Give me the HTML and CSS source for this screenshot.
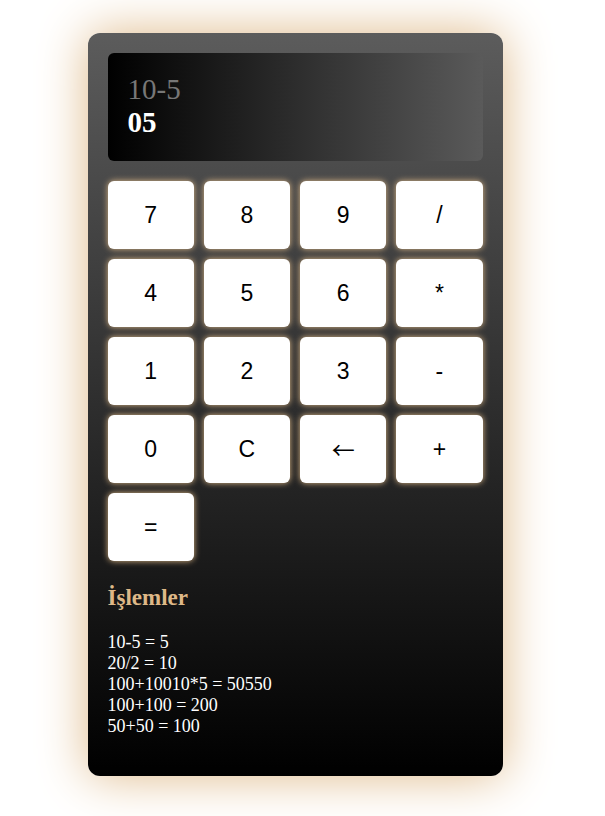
FILE: index.html
```html
<!DOCTYPE html>
<html lang="tr">
<head>
<meta charset="utf-8">
<title>Hesap Makinesi</title>
<link rel="stylesheet" href="styles.css">
</head>
<body>
<div class="page">
  <div class="calc">
    <div class="display">
      <div class="expr">10-5</div>
      <div class="result">05</div>
    </div>
    <div class="keys">
      <button class="key">7</button>
      <button class="key">8</button>
      <button class="key">9</button>
      <button class="key">/</button>
      <button class="key">4</button>
      <button class="key">5</button>
      <button class="key">6</button>
      <button class="key">*</button>
      <button class="key">1</button>
      <button class="key">2</button>
      <button class="key">3</button>
      <button class="key">-</button>
      <button class="key">0</button>
      <button class="key">C</button>
      <button class="key"><span class="arrow">←</span></button>
      <button class="key">+</button>
      <button class="key">=</button>
    </div>
    <h2 class="history-title">İşlemler</h2>
    <ul class="history">
      <li>10-5 = 5</li>
      <li>20/2 = 10</li>
      <li>100+10010*5 = 50550</li>
      <li>100+100 = 200</li>
      <li>50+50 = 100</li>
    </ul>
  </div>
</div>
</body>
</html>
```
FILE: styles.css
```css
html, body {
  margin: 0;
  padding: 0;
  background: #ffffff;
}

.page {
  display: flex;
  justify-content: center;
  padding: 33px 15px 40px 0;
}

.calc {
  width: 375px;
  padding: 20px;
  border-radius: 12px;
  background: linear-gradient(180deg, #5c5c5c 0%, #000000 100%);
  box-shadow: 0 0 50px #deb887;
  font-family: "Liberation Serif", "Times New Roman", serif;
}

.display {
  height: 68px;
  padding: 20px;
  border-radius: 6px;
  background: linear-gradient(90deg, #000000 0%, #5a5a5a 100%);
  font-size: 29px;
  line-height: 33px;
}

.expr {
  color: #777777;
}

.result {
  color: #ffffff;
  font-weight: bold;
}

.keys {
  margin-top: 20px;
  display: grid;
  grid-template-columns: repeat(4, 1fr);
  gap: 10px;
}

.key {
  height: 68px;
  border: none;
  border-radius: 6px;
  background: #ffffff;
  color: #000000;
  box-shadow: 0 0 6px #deb887;
  font-family: "Liberation Sans", Arial, sans-serif;
  font-size: 23px;
  padding: 0;
}

.arrow {
  font-family: "Noto Sans CJK JP", sans-serif;
  font-size: 23px;
}

.history-title {
  margin: 24px 0 21px;
  color: #deb887;
  font-size: 23px;
  font-weight: bold;
  line-height: 26px;
}

.history {
  list-style: none;
  margin: 0 0 19px;
  padding: 0;
  color: #ffffff;
  font-size: 18px;
  line-height: 21px;
}
```
